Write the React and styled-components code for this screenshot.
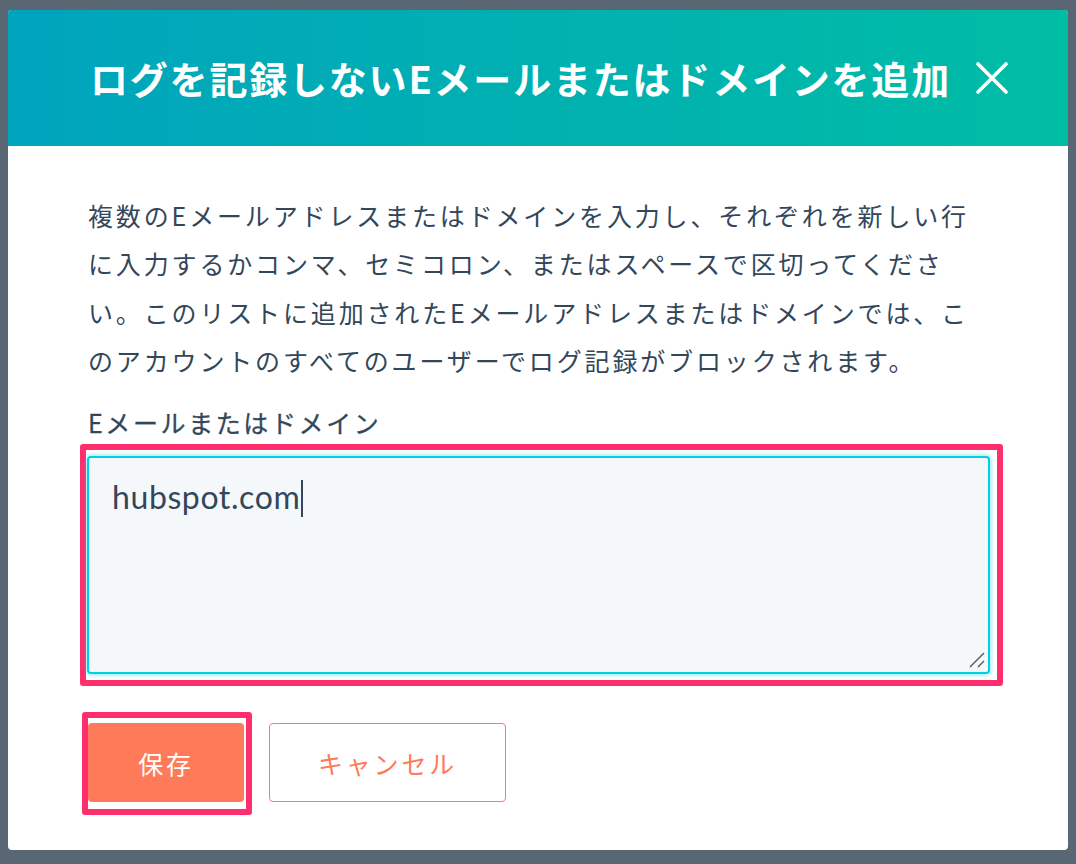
import React from "react";
import styled, { createGlobalStyle } from "styled-components";

const Global = createGlobalStyle`
  html, body { margin: 0; padding: 0; }
  body {
    background: #596775;
    min-height: 100vh;
    font-family: "Noto Sans CJK JP", "Noto Sans", sans-serif;
    color: #33475b;
  }
`;

const Page = styled.div`
  padding: 10px 8px 0 8px;
`;

const Modal = styled.div`
  width: 1060px;
  background: #ffffff;
  border-radius: 4px;
  overflow: hidden;
`;

const Header = styled.header`
  height: 136px;
  display: flex;
  align-items: center;
  padding: 0 60px 0 82px;
  background: linear-gradient(to right, #00a4bd 0%, #00bda5 100%);
  box-sizing: border-box;
`;

const Title = styled.h1`
  margin: 0;
  font-family: "Noto Sans CJK JP", sans-serif;
  font-weight: 700;
  font-size: 38px;
  letter-spacing: 1.8px;
  color: #ffffff;
  line-height: 1;
`;

const CloseButton = styled.button`
  margin-left: auto;
  width: 32px;
  height: 32px;
  padding: 0;
  border: 0;
  background: transparent;
  display: flex;
  align-items: center;
  justify-content: center;
  cursor: pointer;
`;

const Body = styled.div`
  padding: 45px 60px 35px 80px;
`;

const Description = styled.p`
  margin: 0;
  font-size: 25px;
  letter-spacing: 2.85px;
  line-height: 48.3px;
  white-space: nowrap;
  color: #33475b;
`;

const Label = styled.label`
  display: block;
  margin-top: 20px;
  font-size: 25px;
  letter-spacing: 2.6px;
  line-height: 36px;
  font-weight: 400;
  color: #33475b;
  -webkit-text-stroke: 0.3px #33475b;
`;

const Highlight = styled.div`
  display: inline-block;
  border: 6px solid #ff2f6e;
  border-radius: 3px;
  margin-left: ${(p) => p.$shiftLeft}px;
  padding: ${(p) => p.$pad};
`;

const FieldBlock = styled.div`
  margin-top: 4px;
`;

const Field = styled.div`
  position: relative;
  box-sizing: border-box;
  width: 903px;
  height: 218px;
  padding: 20px 23px;
  background: #f5f8fa;
  border: 2px solid #00d0e4;
  border-radius: 4px;
  box-shadow: 0 0 4px 1px rgba(0, 208, 228, 0.45);
  font-family: Lato, "Noto Sans", sans-serif;
  font-size: 32px;
  letter-spacing: 0.6px;
  line-height: 38px;
  color: #33475b;
`;

const Caret = styled.span`
  display: inline-block;
  width: 2px;
  height: 37px;
  margin-left: 1px;
  background: #33475b;
  vertical-align: -8px;
`;

const Grip = styled.svg`
  position: absolute;
  right: 3px;
  bottom: 4px;
`;

const Actions = styled.div`
  margin-top: 26px;
  display: flex;
  align-items: flex-start;
`;

const Button = styled.button`
  box-sizing: border-box;
  width: ${(p) => p.$w}px;
  height: 79px;
  border-radius: 4px;
  font-family: "Noto Sans CJK JP", sans-serif;
  font-size: 25px;
  letter-spacing: 2.8px;
  padding: 0;
  cursor: pointer;
  background: ${(p) => (p.$primary ? "#ff7a59" : "#ffffff")};
  color: ${(p) => (p.$primary ? "#ffffff" : "#ff7a59")};
  border: ${(p) => (p.$primary ? "0" : "1.5px solid #ff7a59")};
  margin-top: ${(p) => p.$mt || 0}px;
  margin-left: ${(p) => p.$ml || 0}px;
`;

export default function App() {
  return (
    <>
      <Global />
      <Page>
        <Modal>
          <Header>
            <Title>ログを記録しないEメールまたはドメインを追加</Title>
            <CloseButton aria-label="close">
              <svg width="32" height="32" viewBox="0 0 32 32">
                <path d="M2 2 L30 30 M30 2 L2 30" stroke="#fff" strokeWidth="3.6" strokeLinecap="round" />
              </svg>
            </CloseButton>
          </Header>
          <Body>
            <Description>
              複数のEメールアドレスまたはドメインを入力し、それぞれを新しい行
              <br />
              に入力するかコンマ、セミコロン、またはスペースで区切ってくださ
              <br />
              い。このリストに追加されたEメールアドレスまたはドメインでは、こ
              <br />
              のアカウントのすべてのユーザーでログ記録がブロックされます。
            </Description>
            <Label>Eメールまたはドメイン</Label>
            <FieldBlock>
              <Highlight $shiftLeft={-8} $pad="6px 7px 6px 1px">
                <Field>
                  hubspot.com
                  <Caret />
                  <Grip width="16" height="16" viewBox="0 0 16 16">
                    <path d="M1 15 L15 1 M9 15 L15 9" stroke="#555" strokeWidth="1.4" />
                  </Grip>
                </Field>
              </Highlight>
            </FieldBlock>
            <Actions>
              <Highlight $shiftLeft={-6} $pad="5px 2px 7px 0">
                <Button $primary $w={156}>保存</Button>
              </Highlight>
              <Button $w={237} $mt={11} $ml={17}>キャンセル</Button>
            </Actions>
          </Body>
        </Modal>
      </Page>
    </>
  );
}
